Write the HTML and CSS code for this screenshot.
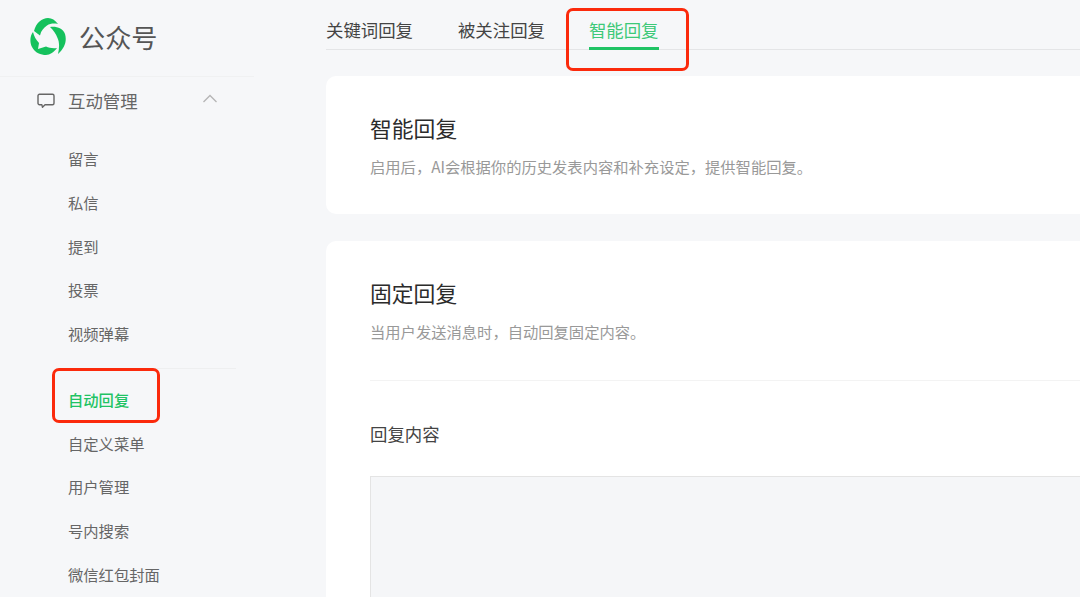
FILE: index.html
```html
<!DOCTYPE html>
<html lang="zh-CN">
<head>
<meta charset="utf-8">
<title>公众号</title>
<link rel="stylesheet" href="styles.css">
</head>
<body>
<div class="page">
  <aside class="sidebar">
    <div class="brand">
      <svg class="logo" viewBox="0 0 36 37" aria-hidden="true">
        <path fill="#15c15d" d="M4 13C6 5 12 0 18 0c4 0 7 2 10 6-4-1-8-.5-11 1.500-3 2-6 5-7 10z"/>
        <path fill="#15c15d" d="M20 9c6-1 13 1 15 7 2 7 0 14-7 20 1.500-6 1.500-12-.5-16-1.500-4-4-8-7.500-11z"/>
        <path fill="#15c15d" d="M3 14C0 18-.5 24 2 29c3 6 9 8 14 8 4 0 8-3 11-7-4 .5-8 0-11-1.500l-8 2.500 1-6C6 22 4 18 3 14z"/>
      </svg>
      <span class="brand-name">公众号</span>
    </div>
    <div class="group-head">
      <svg class="group-icon" viewBox="0 0 18 16" aria-hidden="true">
        <path fill="none" stroke="#666" stroke-width="1.400" stroke-linejoin="round" d="M2.500 1.200h13a1.500 1.500 0 0 1 1.500 1.500v7.600a1.500 1.500 0 0 1-1.500 1.500H8l-2.500 2.500-.6-2.500H2.500A1.500 1.500 0 0 1 1 10.300V2.700a1.500 1.500 0 0 1 1.500-1.500z"/>
      </svg>
      <span class="group-title">互动管理</span>
      <svg class="chevron" viewBox="0 0 16 9" aria-hidden="true">
        <path fill="none" stroke="#b5b5b5" stroke-width="1.300" d="M1.500 8 8 1.500 14.500 8"/>
      </svg>
    </div>
    <nav class="menu first">
      <a class="item">留言</a>
      <a class="item">私信</a>
      <a class="item">提到</a>
      <a class="item">投票</a>
      <a class="item">视频弹幕</a>
    </nav>
    <div class="divider"></div>
    <nav class="menu">
      <a class="item active">自动回复</a>
      <a class="item">自定义菜单</a>
      <a class="item">用户管理</a>
      <a class="item">号内搜索</a>
      <a class="item">微信红包封面</a>
    </nav>
  </aside>
  <main class="main">
    <div class="tabs">
      <a class="tab">关键词回复</a>
      <a class="tab">被关注回复</a>
      <a class="tab current">智能回复</a>
    </div>
    <section class="card card-ai">
      <h2 class="title">智能回复</h2>
      <p class="desc">启用后，AI会根据你的历史发表内容和补充设定，提供智能回复。</p>
    </section>
    <section class="card card-fixed">
      <h2 class="title">固定回复</h2>
      <p class="desc">当用户发送消息时，自动回复固定内容。</p>
      <div class="rule"></div>
      <div class="label">回复内容</div>
      <div class="editor"></div>
    </section>
  </main>
</div>
<div class="mark mark-side"></div>
<div class="mark mark-tab"></div>
</body>
</html>
```
FILE: styles.css
```css
* { box-sizing: border-box; }
html, body { margin: 0; height: 100%; overflow: hidden; }
body {
  position: relative;
  background: #f6f7f9;
  font-family: "Noto Sans CJK SC", "Noto Sans", sans-serif;
  color: #353535;
}
.page { display: flex; height: 597px; overflow: hidden; }
.sidebar { width: 254px; flex: none; }
.brand {
  display: flex;
  align-items: center;
  height: 77px;
  padding: 0 0 3px 30px;
  border-bottom: 1px solid #f0f1f2;
}
.logo { width: 36px; height: 37px; flex: none; }
.brand-name { margin-left: 13px; font-size: 26.200px; color: #555; line-height: 36px; }
.group-head { display: flex; align-items: center; height: 47px; padding-left: 37px; }
.group-icon { width: 18px; height: 16px; flex: none; }
.group-title { margin-left: 13px; font-size: 17.400px; color: #666; }
.chevron { width: 16px; height: 9px; margin-left: 64px; margin-top: -5px; }
.menu { display: flex; flex-direction: column; }
.menu.first { padding-top: 12px; }
.item {
  display: block;
  height: 43.750px;
  line-height: 45px;
  padding-left: 68px;
  font-size: 15.300px;
  color: #666;
}
.item.active { color: #1fc364; font-weight: 500; }
.divider { height: 1px; margin: 13px 18px 8px 68px; background: #eeeff0; }
.main { flex: 1; min-width: 0; padding-left: 72px; margin-right: -30px; }
.tabs { display: flex; height: 50px; border-bottom: 1px solid #e4e5e7; gap: 45px; }
.tab {
  height: 49px;
  padding-top: 17px;
  font-size: 17.400px;
  line-height: 26px;
  color: #444;
}
.tab.current { height: 50px; margin-left: -1px; color: #3dc978; border-bottom: 3px solid #1fc364; }
.card { background: #fff; border-radius: 10px; padding-left: 44px; }
.card-ai { height: 138px; margin-top: 26px; padding-top: 35px; }
.card-fixed { height: 400px; margin-top: 27px; padding-top: 35px; }
.title { margin: 0; font-size: 21.800px; font-weight: 400; line-height: 34px; color: #2b2b2b; }
.desc { margin: 10px 0 0; font-size: 15.300px; line-height: 22px; color: #999; white-space: nowrap; }
.rule { height: 1px; margin-top: 38px; background: #f3f3f3; }
.label { margin-top: 40px; font-size: 17.400px; line-height: 26px; color: #444; }
.editor { height: 140px; margin-top: 29px; background: #f5f6f8; border: 1px solid #e4e4e4; border-right: 0; }
.mark { position: absolute; border: 3px solid #fb2a0c; border-radius: 7px; }
.mark-side { left: 52px; top: 368px; width: 108px; height: 55px; }
.mark-tab { left: 566px; top: 8px; width: 123px; height: 63px; }
```
